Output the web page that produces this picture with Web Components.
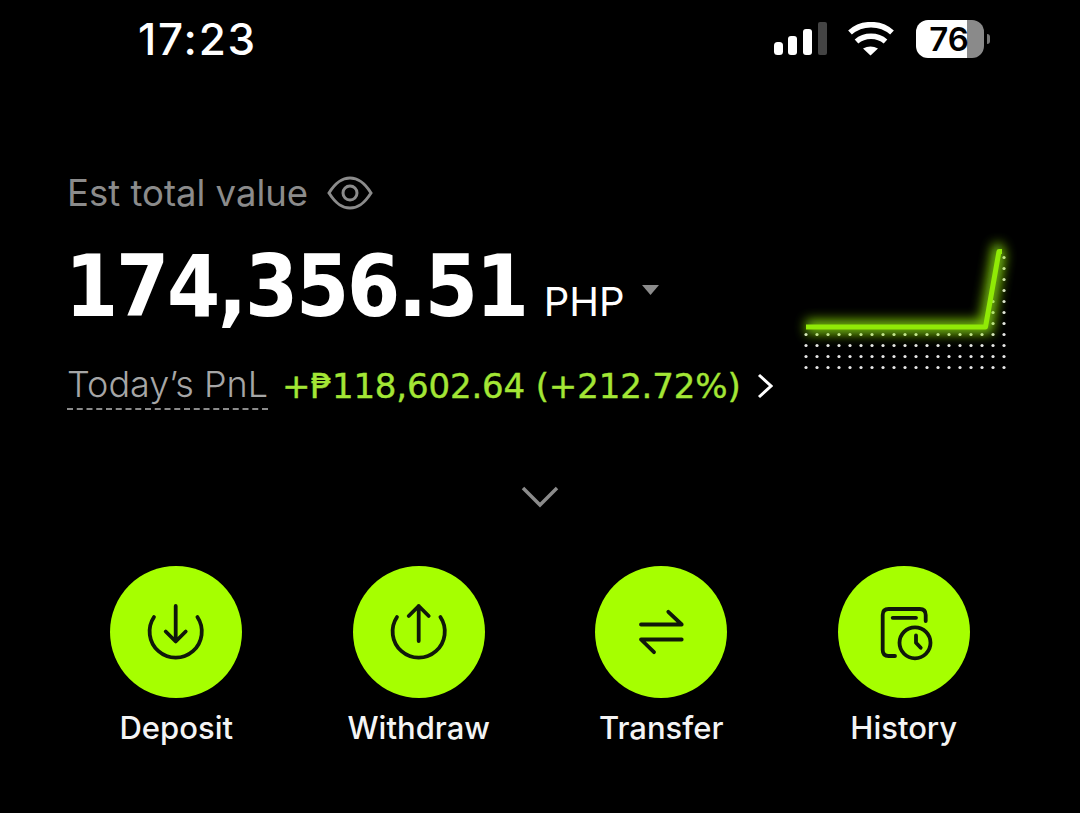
<!DOCTYPE html>
<html lang="en">
<head>
<meta charset="utf-8">
<title>Wallet</title>
<style>
  html, body { margin: 0; background: #000; }
  body { width: 1080px; height: 813px; overflow: hidden; font-family: Inter, "Liberation Sans", sans-serif; color: #fff; }
</style>
</head>
<body>
<wallet-screen>
  <status-bar time="17:23" battery="76"></status-bar>
  <balance-summary></balance-summary>
  <action-row>
    <action-button icon="deposit">Deposit</action-button>
    <action-button icon="withdraw">Withdraw</action-button>
    <action-button icon="transfer">Transfer</action-button>
    <action-button icon="history">History</action-button>
  </action-row>
</wallet-screen>
<script>
class WalletScreen extends HTMLElement {
  constructor() {
    super();
    this.attachShadow({ mode: 'open' }).innerHTML = `
      <style>
        :host { display: flex; flex-direction: column; width: 1080px; height: 813px; background: #000; }
      </style>
      <slot></slot>`;
  }
}

class StatusBar extends HTMLElement {
  constructor() {
    super();
    const time = this.getAttribute('time');
    const battery = this.getAttribute('battery');
    this.attachShadow({ mode: 'open' }).innerHTML = `
      <style>
        :host { display: flex; align-items: center; justify-content: space-between; height: 78px; padding: 0 90px 0 138px; }
        .time { font-size: 44px; font-weight: 500; letter-spacing: 1.800px; line-height: 78px; }
        .icons { display: flex; align-items: center; }
        .signal { display: block; margin-right: 21px; }
        .wifi { display: block; margin-right: 22px; }
        .battery { width: 68px; height: 38px; border-radius: 12px; color: #000; font-size: 33px; font-weight: 600;
          background: linear-gradient(90deg, #fff 0 51px, #8a8a8a 51px); text-align: center; line-height: 38px; }
        .battery span { display: block; margin-right: 2px; }
        .nub { width: 3px; height: 10px; margin-left: 3px; background: #777; border-radius: 0 3px 3px 0; }
      </style>
      <span class="time">${time}</span>
      <div class="icons">
        <svg class="signal" width="53" height="34" viewBox="0 0 53 34">
          <rect x="0" y="20" width="9" height="13" rx="3.5" fill="#fff"/>
          <rect x="14" y="14" width="9" height="19" rx="3" fill="#fff"/>
          <rect x="29" y="7" width="9" height="26" rx="3" fill="#fff"/>
          <rect x="44" y="0" width="9" height="33" rx="2" fill="#444"/>
        </svg>
        <svg class="wifi" width="46" height="34" viewBox="0 0 46 34" fill="none" stroke="#fff" stroke-width="5.5">
          <path d="M2 10.5C13.500 0 32.500 0 44 10.500"/>
          <path d="M8.500 19.500C16.500 12.500 29.500 12.500 37.500 19.500"/>
          <path d="M15 26.500Q22.500 22.500 30 26.500L22.500 33.500Z" fill="#fff" stroke="none"/>
        </svg>
        <div class="battery"><span>${battery}</span></div>
        <div class="nub"></div>
      </div>`;
  }
}

class SparkChart extends HTMLElement {
  constructor() {
    super();
    let dots = '';
    // dot grid, coordinates are local to the 240x160 box
    for (let r = 0; r < 4; r++) {
      for (let c = 0; c < 19; c++) {
        dots += `<circle cx="${26 + c * 11}" cy="${104.500 + r * 11}" r="1.600"/>`;
      }
    }
    for (let r = 1; r <= 3; r++) dots += `<circle cx="213" cy="${104.500 - r * 11}" r="1.600"/>`;
    for (let r = 1; r <= 7; r++) dots += `<circle cx="224" cy="${104.500 - r * 11}" r="1.600"/>`;
    this.attachShadow({ mode: 'open' }).innerHTML = `
      <style>
        :host { display: block; width: 240px; height: 160px; }
        svg { display: block; }
      </style>
      <svg width="240" height="160" viewBox="0 0 240 160" fill="none">
        <defs>
          <filter id="glow" x="-20%" y="-30%" width="140%" height="160%"><feGaussianBlur stdDeviation="6"/></filter>
        </defs>
        <g fill="#e6e6e6">${dots}</g>
        <path d="M26 97H206L219 21H223" stroke="#8fe60a" stroke-width="14" filter="url(#glow)" opacity=".85"/>
        <path d="M26 97H205.500L219 21.500H222" stroke="#90ea06" stroke-width="5" stroke-linejoin="round"/>
      </svg>`;
  }
}

class BalanceSummary extends HTMLElement {
  constructor() {
    super();
    this.attachShadow({ mode: 'open' }).innerHTML = `
      <style>
        :host { display: flex; justify-content: space-between; padding: 92px 60px 0 67px; }
        .label-row { display: flex; align-items: center; height: 46px; color: #8b8b8b; font-size: 36.500px; font-weight: 400; }
        .label-row svg { display: block; margin-left: 19px; }
        .value-row { display: flex; align-items: baseline; margin-top: 21px; height: 100px; line-height: 100px; }
        .value { font-family: "DejaVu Sans", Inter, sans-serif; font-stretch: condensed; font-size: 85px; font-weight: 700; letter-spacing: -2.200px; margin-left: -2px; }
        .cur { font-size: 40px; font-weight: 400; margin-left: 17px; }
        .caret { display: block; margin: 5px 0 0 17px; align-self: center; }
        .pnl-row { display: flex; align-items: center; margin-top: 25px; height: 48px; font-size: 36px; }
        .pnl-label { color: #a6a6a6; font-weight: 300; border-bottom: 2px dashed #8b8b8b; line-height: 44px; height: 46px; }
        .pnl-value { font-family: "DejaVu Sans", Inter, sans-serif; font-size: 34px; color: #a3e635; margin-left: 14px; letter-spacing: -.15px; -webkit-text-stroke: .4px #a3e635; white-space: nowrap; }
        .pnl-row svg { display: block; margin-left: 16px; }
        spark-chart { margin-top: 60px; }
        .more { position: absolute; left: 521px; top: 486px; display: block; }
      </style>
      <div class="left">
        <div class="label-row">Est total value
          <svg width="46" height="34" viewBox="0 0 46 34" fill="none" stroke="#8b8b8b" stroke-width="3">
            <path d="M2 17C9 6 15 2 23 2C31 2 37 6 44 17C37 28 31 32 23 32C15 32 9 28 2 17Z"/>
            <circle cx="23" cy="17" r="7"/>
          </svg>
        </div>
        <div class="value-row">
          <span class="value">174,356.51</span>
          <span class="cur">PHP</span>
          <svg class="caret" width="17" height="10" viewBox="0 0 17 10"><path d="M0 0H17L8.500 10Z" fill="#8b8b8b"/></svg>
        </div>
        <div class="pnl-row">
          <span class="pnl-label">Today’s PnL</span>
          <span class="pnl-value">+₱118,602.64 (+212.72%)</span>
          <svg width="16" height="26" viewBox="0 0 16 26" fill="none" stroke="#fff" stroke-width="3"><path d="M2 2L14 13L2 24"/></svg>
        </div>
      </div>
      <spark-chart></spark-chart>
      <svg class="more" width="38" height="22" viewBox="0 0 38 22" fill="none" stroke="#8b8b8b" stroke-width="3.500"><path d="M2 2L19 19L36 2"/></svg>`;
  }
}

const ICONS = {
  deposit: '<path d="M44 51A26.100 26.100 0 1 0 87.400 51"/><path d="M65.700 40V75M55.700 65.500L65.700 75.500L75.700 65.500"/>',
  withdraw: '<path d="M44 51A26.100 26.100 0 1 0 87.400 51"/><path d="M65.700 75V40M55.700 50L65.700 40L75.700 50"/>',
  transfer: '<path d="M46 58.500H86.700L73.300 45.800"/><path d="M86.700 73.500H46L59 86.200"/>',
  history: '<path d="M87.700 55V49C87.700 45 85.700 43 81.700 43H50.700C46.700 43 44.700 45 44.700 49V84C44.700 88 46.700 90 50.700 90H57"/><path d="M54.700 51.800H78"/><circle cx="77" cy="76.800" r="15.500"/><path d="M78 69.500V76.800L82.700 81.800"/>'
};

class ActionButton extends HTMLElement {
  constructor() {
    super();
    const icon = ICONS[this.getAttribute('icon')];
    this.attachShadow({ mode: 'open' }).innerHTML = `
      <style>
        :host { display: flex; flex-direction: column; align-items: center; }
        .circle { width: 132px; height: 132px; border-radius: 50%; background: #a6ff00; }
        svg { display: block; }
        .label { margin-top: 10px; font-size: 31px; font-weight: 500; line-height: 40px; color: #f4f4f4; }
      </style>
      <div class="circle">
        <svg width="132" height="132" viewBox="0 0 132 132" fill="none" stroke="#10180a" stroke-width="3.800" stroke-linecap="round" stroke-linejoin="round">${icon}</svg>
      </div>
      <div class="label"><slot></slot></div>`;
  }
}

class ActionRow extends HTMLElement {
  constructor() {
    super();
    this.attachShadow({ mode: 'open' }).innerHTML = `
      <style>
        :host { display: grid; grid-template-columns: repeat(4, 242.500px); margin-top: 156px; padding-left: 55px; }
      </style>
      <slot></slot>`;
  }
}

customElements.define('wallet-screen', WalletScreen);
customElements.define('status-bar', StatusBar);
customElements.define('spark-chart', SparkChart);
customElements.define('balance-summary', BalanceSummary);
customElements.define('action-button', ActionButton);
customElements.define('action-row', ActionRow);
</script>
</body>
</html>
